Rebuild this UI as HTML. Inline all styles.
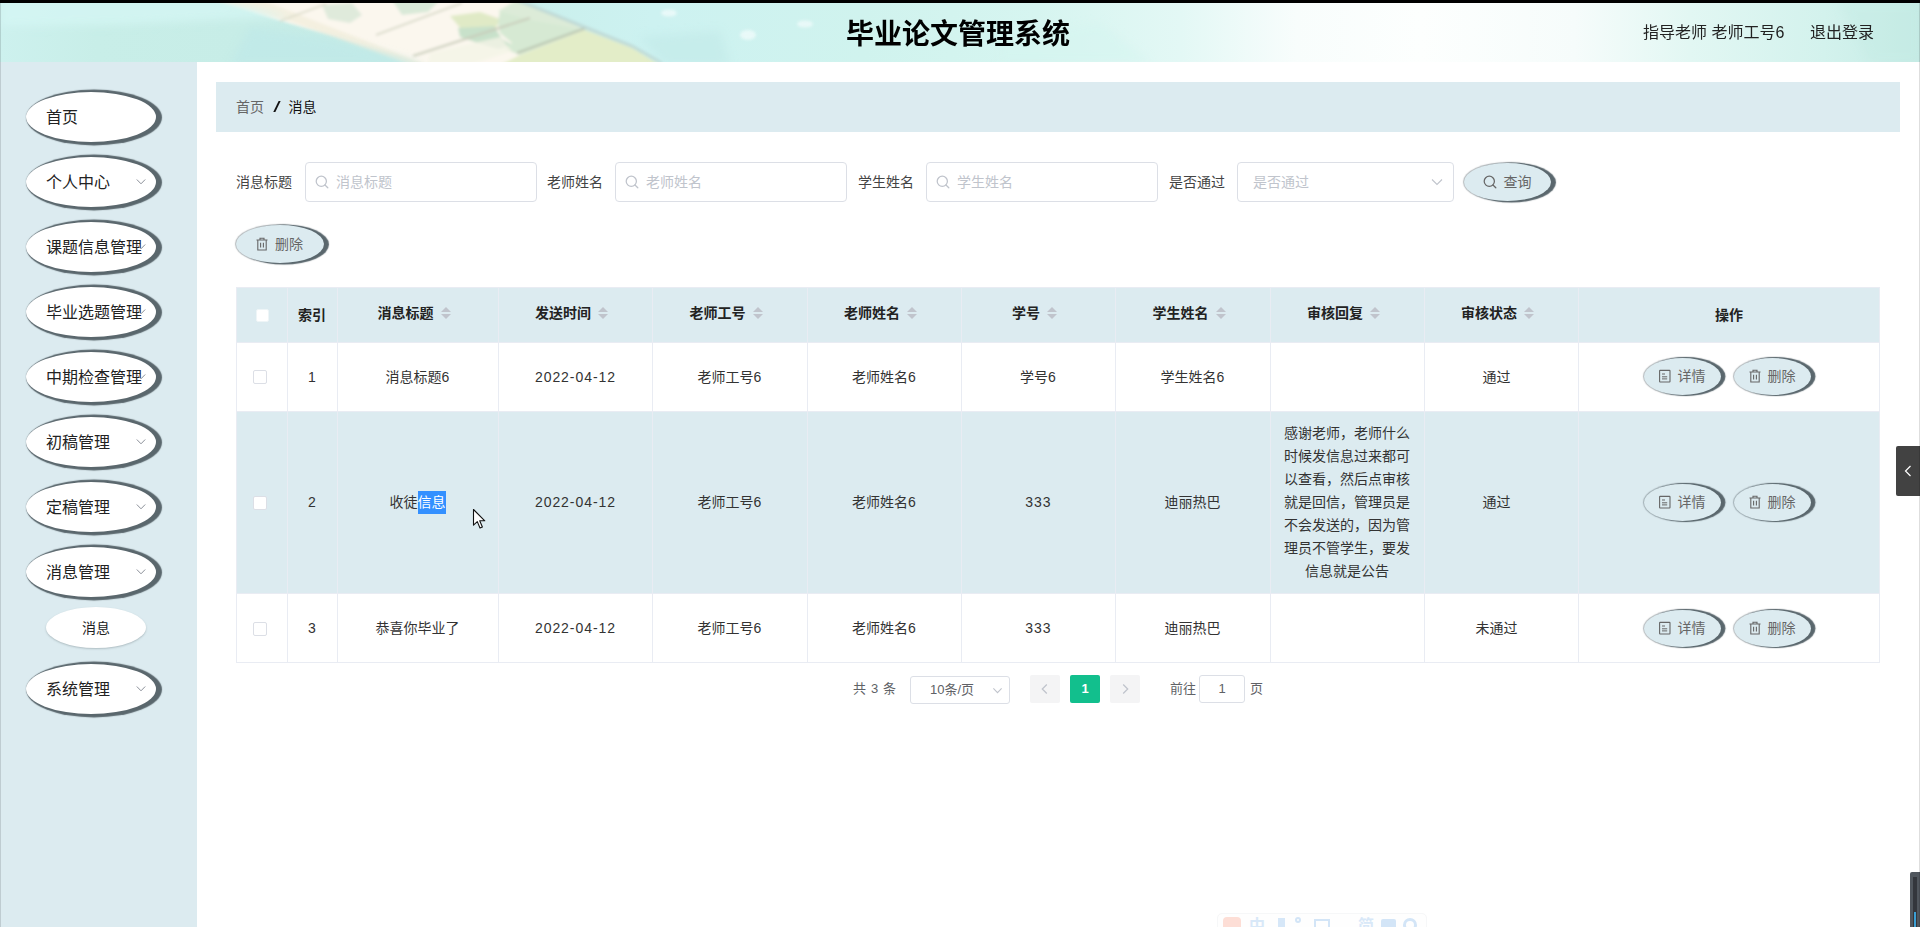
<!DOCTYPE html>
<html lang="zh-CN">
<head>
<meta charset="utf-8">
<title>毕业论文管理系统</title>
<style>
*{box-sizing:border-box;margin:0;padding:0}
html,body{width:1920px;height:927px;overflow:hidden;background:#fff}
body{font-family:"Liberation Sans","Noto Sans CJK SC",sans-serif;color:#333;position:relative;font-size:14px}
.abs{position:absolute}
#topbar{left:0;top:0;width:1920px;height:3px;background:#000}
#header{left:0;top:3px;width:1920px;height:59px;overflow:hidden;background:#d3f1ee}
#title{left:-2px;top:5px;width:1920px;height:59px;line-height:59px;text-align:center;font-size:28px;font-weight:bold;color:#000}
.hr{top:3px;height:59px;line-height:59px;font-size:16px;color:#222}
#sidebar{left:0;top:62px;width:197px;height:865px;background:#dcebf0}
.menu{left:26px;width:130px;height:50px;border-radius:50%;background:#fff;box-shadow:3px .5px 1px 3px #5a676d;font-size:16px;color:#222;line-height:52px;padding-left:20px}
.sub{left:46px;top:607px;width:100px;height:41px;border-radius:50%;background:#fff;box-shadow:0 1px 2px rgba(90,103,109,.35);font-size:14px;color:#222;line-height:43px;text-align:center}
#crumb{left:216px;top:82px;width:1684px;height:50px;background:#dcebf0;line-height:50px;padding-left:20px;font-size:14px;color:#333}
.lbl{top:162px;height:40px;line-height:40px;font-size:14px;color:#444}
.inp{top:162px;height:40px;border:1px solid #dcdfe6;border-radius:4px;background:#fff;line-height:38px;font-size:14px;color:#c0c4cc}
.btn{border-radius:50%;background:#dcebf0;box-shadow:2px 0 1px 2px #5a676d;color:#666;font-size:14px;text-align:center}

.ic{display:inline-block;vertical-align:middle}
.bt{line-height:38px;white-space:nowrap}
.bt svg{vertical-align:-2px;margin-right:7px;margin-left:-1px}
#tbl{left:236px;top:287px;width:1644px;height:376px}
.cell{position:absolute;text-align:center;font-size:14px;color:#333;line-height:23px;white-space:nowrap}
.hd{font-weight:bold;color:#222}
.vl{position:absolute;top:0;width:1px;height:375px;background:#e9ecf3}
.hl{position:absolute;left:0;width:1644px;height:1px;background:#e9ecf3}
.cb{position:absolute;width:14px;height:14px;border:1px solid #dcdfe6;border-radius:2px;background:#fff}
.caret{display:inline-block;position:relative;width:24px;height:34px;vertical-align:middle}
.caret i{position:absolute;left:7px;width:0;height:0;border:5px solid transparent}
.caret i.u{top:5px;border-bottom-color:#c0c4cc}
.caret i.d{bottom:7px;border-top-color:#c0c4cc}
.pg{font-size:13px;color:#606266;top:675px;height:28px;line-height:28px}
.n{letter-spacing:.95px;margin-right:-.95px}
</style>
</head>
<body>
<div id="topbar" class="abs"></div>
<div id="header" class="abs"><svg width="1920" height="59" viewBox="0 0 1920 59" style="display:block">
<defs>
<linearGradient id="hg" x1="0" y1="0" x2="1920" y2="0" gradientUnits="userSpaceOnUse">
<stop offset="0" stop-color="#cdf1ee"/><stop offset="0.05" stop-color="#c8eee8"/><stop offset="0.2" stop-color="#c6ece6"/>
<stop offset="0.34" stop-color="#cdf2f1"/><stop offset="0.45" stop-color="#d0f3ee"/><stop offset="0.54" stop-color="#d6f5f0"/>
<stop offset="0.615" stop-color="#e3f8f5"/><stop offset="0.675" stop-color="#f8fdfc"/><stop offset="0.74" stop-color="#fdfffe"/>
<stop offset="0.82" stop-color="#f6fcfb"/><stop offset="0.88" stop-color="#e2f7f3"/><stop offset="0.95" stop-color="#d3f2ed"/><stop offset="1" stop-color="#c6ebe5"/>
</linearGradient>
<filter id="bl" x="-5%" y="-20%" width="110%" height="140%"><feGaussianBlur stdDeviation="1.6"/></filter>
<filter id="bl2" x="-5%" y="-30%" width="110%" height="160%"><feGaussianBlur stdDeviation="4"/></filter>
</defs>
<rect width="1920" height="59" fill="url(#hg)"/>
<g filter="url(#bl)">
<polygon points="212,-3 517,-3 660,62 428,62" fill="#fbf7ee"/>
<polygon points="212,-3 262,-3 300,12 428,62 410,62 290,18" fill="#f3eddc" opacity=".8"/>
<polygon points="322,2 352,0 362,12 350,20 328,16" fill="#dfeadb"/>
<polygon points="392,-3 440,-3 428,9 402,12" fill="#d9e9d8"/>
<polygon points="450,13 480,9 500,16 496,25 462,27" fill="#e0eac6"/>
<polygon points="458,25 494,23 502,36 512,42 498,46 478,40 460,34" fill="#c8e1ca"/>
<polygon points="500,8 530,14 585,27 520,52 505,46 512,40 500,30 498,20" fill="#d6e9d3"/>
<polygon points="517,-3 560,14 585,27 530,17 498,8" fill="#dcebd8"/>
<polygon points="585,27 632,45 660,62 500,62 518,53" fill="#e3edc8"/>
<polygon points="430,50 500,34 512,48 470,62 428,62" fill="#f4f4e6" opacity=".8"/>
<path d="M326 1L280 18" stroke="#d9d9c8" stroke-width="1.6" fill="none"/>
<path d="M462 0L376 32" stroke="#d2d4c3" stroke-width="1.8" fill="none"/>
<path d="M530 15L413 53" stroke="#c8ccba" stroke-width="2" fill="none"/>
<path d="M586 25L517 50" stroke="#b8c3ad" stroke-width="2" fill="none"/>
<path d="M517 -3L632 43L662 60" stroke="#bfd9d6" stroke-width="3" fill="none"/>
</g>
<g filter="url(#bl2)">
<polygon points="0,-5 215,-5 290,14 120,22 0,24" fill="#d6f6f5" opacity=".7"/>
<polygon points="250,24 330,36 425,62 230,62" fill="#bfe8e8" opacity=".7"/>
<polygon points="640,34 720,28 730,62 665,62" fill="#c2eae7" opacity=".6"/>
<polygon points="1840,0 1920,0 1920,59 1870,59" fill="#c4eae3" opacity=".4"/>
<polygon points="1000,40 1100,20 1150,59 1000,59" fill="#d6f5f0" opacity=".6"/>
</g>
<g filter="url(#bl)" fill="#eefbfa" opacity=".85">
<ellipse cx="669" cy="10" rx="8" ry="3.5"/><ellipse cx="748" cy="32" rx="8" ry="5"/><ellipse cx="805" cy="21" rx="8" ry="3.5"/>
</g>
</svg></div>
<div id="title" class="abs">毕业论文管理系统</div>
<div class="abs hr" style="left:1643px">指导老师 老师工号6</div>
<div class="abs hr" style="left:1810px">退出登录</div>
<div id="sidebar" class="abs"></div>
<div class="abs menu" style="top:92px">首页</div>
<div class="abs menu" style="top:157px">个人中心<svg class="abs" style="left:110px;top:21px" width="10" height="8" viewBox="0 0 10 8"><path d="M0.8 1.5L5 5.8L9.2 1.5" fill="none" stroke="#8a8f98" stroke-width="1"/></svg></div>
<div class="abs menu" style="top:222px">课题信息管理<svg class="abs" style="left:110px;top:21px" width="10" height="8" viewBox="0 0 10 8"><path d="M0.8 1.5L5 5.8L9.2 1.5" fill="none" stroke="#8a8f98" stroke-width="1"/></svg></div>
<div class="abs menu" style="top:287px">毕业选题管理<svg class="abs" style="left:110px;top:21px" width="10" height="8" viewBox="0 0 10 8"><path d="M0.8 1.5L5 5.8L9.2 1.5" fill="none" stroke="#8a8f98" stroke-width="1"/></svg></div>
<div class="abs menu" style="top:352px">中期检查管理<svg class="abs" style="left:110px;top:21px" width="10" height="8" viewBox="0 0 10 8"><path d="M0.8 1.5L5 5.8L9.2 1.5" fill="none" stroke="#8a8f98" stroke-width="1"/></svg></div>
<div class="abs menu" style="top:417px">初稿管理<svg class="abs" style="left:110px;top:21px" width="10" height="8" viewBox="0 0 10 8"><path d="M0.8 1.5L5 5.8L9.2 1.5" fill="none" stroke="#8a8f98" stroke-width="1"/></svg></div>
<div class="abs menu" style="top:482px">定稿管理<svg class="abs" style="left:110px;top:21px" width="10" height="8" viewBox="0 0 10 8"><path d="M0.8 1.5L5 5.8L9.2 1.5" fill="none" stroke="#8a8f98" stroke-width="1"/></svg></div>
<div class="abs menu" style="top:547px">消息管理<svg class="abs" style="left:110px;top:21px" width="10" height="8" viewBox="0 0 10 8"><path d="M0.8 1.5L5 5.8L9.2 1.5" fill="none" stroke="#8a8f98" stroke-width="1"/></svg></div>
<div class="abs sub">消息</div>
<div class="abs menu" style="top:664px">系统管理<svg class="abs" style="left:110px;top:21px" width="10" height="8" viewBox="0 0 10 8"><path d="M0.8 1.5L5 5.8L9.2 1.5" fill="none" stroke="#8a8f98" stroke-width="1"/></svg></div>
<div id="crumb" class="abs"><span style="color:#666">首页</span><span style="display:inline-block;margin:0 10px 0 10.5px;color:#111;transform:scaleX(1.9)">/</span><span style="color:#111">消息</span></div>
<div class="abs lbl" style="left:236px">消息标题</div>
<div class="abs inp" style="left:305px;width:232px"><span class="abs" style="left:9px;top:-1px;color:#bfc3cb"><svg class="ic" width="14" height="14" viewBox="0 0 14 14"><circle cx="6.3" cy="6.3" r="5.1" fill="none" stroke="currentColor" stroke-width="1.25"/><path d="M10 10L12.8 12.8" stroke="currentColor" stroke-width="1.25" stroke-linecap="round"/></svg></span><span class="abs" style="left:30px;top:0">消息标题</span></div>
<div class="abs lbl" style="left:547px">老师姓名</div>
<div class="abs inp" style="left:615px;width:232px"><span class="abs" style="left:9px;top:-1px;color:#bfc3cb"><svg class="ic" width="14" height="14" viewBox="0 0 14 14"><circle cx="6.3" cy="6.3" r="5.1" fill="none" stroke="currentColor" stroke-width="1.25"/><path d="M10 10L12.8 12.8" stroke="currentColor" stroke-width="1.25" stroke-linecap="round"/></svg></span><span class="abs" style="left:30px;top:0">老师姓名</span></div>
<div class="abs lbl" style="left:858px">学生姓名</div>
<div class="abs inp" style="left:926px;width:232px"><span class="abs" style="left:9px;top:-1px;color:#bfc3cb"><svg class="ic" width="14" height="14" viewBox="0 0 14 14"><circle cx="6.3" cy="6.3" r="5.1" fill="none" stroke="currentColor" stroke-width="1.25"/><path d="M10 10L12.8 12.8" stroke="currentColor" stroke-width="1.25" stroke-linecap="round"/></svg></span><span class="abs" style="left:30px;top:0">学生姓名</span></div>
<div class="abs lbl" style="left:1169px">是否通过</div>
<div class="abs inp" style="left:1237px;width:217px"><span class="abs" style="left:15px;top:0">是否通过</span><svg class="abs" style="left:193px;top:13px" width="12" height="12" viewBox="0 0 12 12"><path d="M1 3.5L6 8.5L11 3.5" fill="none" stroke="#c0c4cc" stroke-width="1.1"/></svg></div>
<div class="abs btn bt" style="left:1464px;top:163px;width:87px;height:38px;box-shadow:4px .5px 1px 1px #5a676d,0 0 1px 1px rgba(90,103,109,.45)"><svg class="ic" width="14" height="14" viewBox="0 0 14 14"><circle cx="6.3" cy="6.3" r="5.1" fill="none" stroke="currentColor" stroke-width="1.25"/><path d="M10 10L12.8 12.8" stroke="currentColor" stroke-width="1.25" stroke-linecap="round"/></svg><span>查询</span></div>
<div class="abs btn bt" style="left:236px;top:225px;width:88px;height:38px;box-shadow:4px .5px 1px 1px #5a676d,0 0 1px 1px rgba(90,103,109,.45)"><svg class="ic" width="12" height="14" viewBox="0 0 12 14"><path d="M0.5 3H11.5M4 3V1.2H8V3M1.8 3V13H10.2V3M4.6 5.8V10.5M7.4 5.8V10.5" fill="none" stroke="currentColor" stroke-width="1.1"/></svg><span>删除</span></div>
<div id="tbl" class="abs">
<div class="abs" style="left:0;top:0;width:1644px;height:55px;background:#dcebf0"></div>
<div class="abs" style="left:0;top:124px;width:1644px;height:182px;background:#dcebf0"></div>
<div class="vl" style="left:0px"></div><div class="vl" style="left:51px"></div><div class="vl" style="left:101px"></div><div class="vl" style="left:262px"></div><div class="vl" style="left:416px"></div><div class="vl" style="left:571px"></div><div class="vl" style="left:725px"></div><div class="vl" style="left:879px"></div><div class="vl" style="left:1034px"></div><div class="vl" style="left:1188px"></div><div class="vl" style="left:1342px"></div><div class="vl" style="left:1643px"></div>
<div class="hl" style="top:0px"></div><div class="hl" style="top:55px"></div><div class="hl" style="top:124px"></div><div class="hl" style="top:306px"></div><div class="hl" style="top:375px"></div>
<div class="cell hd" style="left:51px;top:17px;width:50px;height:23px">索引</div>
<div class="cell hd" style="left:101px;top:9px;width:161px;height:34px;line-height:34px">消息标题<span class="caret"><i class="u"></i><i class="d"></i></span></div>
<div class="cell hd" style="left:262px;top:9px;width:154px;height:34px;line-height:34px">发送时间<span class="caret"><i class="u"></i><i class="d"></i></span></div>
<div class="cell hd" style="left:416px;top:9px;width:155px;height:34px;line-height:34px">老师工号<span class="caret"><i class="u"></i><i class="d"></i></span></div>
<div class="cell hd" style="left:571px;top:9px;width:154px;height:34px;line-height:34px">老师姓名<span class="caret"><i class="u"></i><i class="d"></i></span></div>
<div class="cell hd" style="left:725px;top:9px;width:154px;height:34px;line-height:34px">学号<span class="caret"><i class="u"></i><i class="d"></i></span></div>
<div class="cell hd" style="left:879px;top:9px;width:155px;height:34px;line-height:34px">学生姓名<span class="caret"><i class="u"></i><i class="d"></i></span></div>
<div class="cell hd" style="left:1034px;top:9px;width:154px;height:34px;line-height:34px">审核回复<span class="caret"><i class="u"></i><i class="d"></i></span></div>
<div class="cell hd" style="left:1188px;top:9px;width:154px;height:34px;line-height:34px">审核状态<span class="caret"><i class="u"></i><i class="d"></i></span></div>
<div class="cell hd" style="left:1342px;top:17px;width:302px;height:23px">操作</div>
<div class="abs" style="left:182px;top:204px;width:28px;height:22.5px;background:#3390ff"></div>
<div class="cb" style="left:20px;top:22px;width:13px;height:13px;border-color:#eef5f7"></div>
<div class="cb" style="left:17px;top:83px"></div>
<div class="cell" style="left:51px;top:79.0px;width:50px">1</div>
<div class="cell" style="left:101px;top:79.0px;width:161px">消息标题6</div>
<div class="cell" style="left:262px;top:79.0px;width:154px"><span class="n">2022-04-12</span></div>
<div class="cell" style="left:416px;top:79.0px;width:155px">老师工号6</div>
<div class="cell" style="left:571px;top:79.0px;width:154px">老师姓名6</div>
<div class="cell" style="left:725px;top:79.0px;width:154px">学号6</div>
<div class="cell" style="left:879px;top:79.0px;width:155px">学生姓名6</div>
<div class="cell" style="left:1188px;top:79.0px;width:154px"><span style="margin-right:9px">通过</span></div>
<div class="abs btn bt" style="left:1408px;top:71px;width:77px;height:37px;line-height:37px;box-shadow:3.5px 0 1px 1px #5a676d,0 0 1px 1px rgba(90,103,109,.45)"><svg class="ic" width="12" height="14" viewBox="0 0 12 14"><rect x="0.6" y="1.4" width="10.4" height="11.6" rx="0.5" fill="none" stroke="currentColor" stroke-width="1.1"/><path d="M3 5H6M3 7.8H8.2M3 9.9H8.2" stroke="currentColor" stroke-width="1"/></svg><span>详情</span></div>
<div class="abs btn bt" style="left:1498px;top:71px;width:77px;height:37px;line-height:37px;box-shadow:3.5px 0 1px 1px #5a676d,0 0 1px 1px rgba(90,103,109,.45)"><svg class="ic" width="12" height="14" viewBox="0 0 12 14"><path d="M0.5 3H11.5M4 3V1.2H8V3M1.8 3V13H10.2V3M4.6 5.8V10.5M7.4 5.8V10.5" fill="none" stroke="currentColor" stroke-width="1.1"/></svg><span>删除</span></div>
<div class="cb" style="left:17px;top:209px"></div>
<div class="cell" style="left:51px;top:203.5px;width:50px">2</div>
<div class="cell" style="left:101px;top:203.5px;width:161px">收徒<span style="color:#fff;position:relative;z-index:1">信息</span></div>
<div class="cell" style="left:262px;top:203.5px;width:154px"><span class="n">2022-04-12</span></div>
<div class="cell" style="left:416px;top:203.5px;width:155px">老师工号6</div>
<div class="cell" style="left:571px;top:203.5px;width:154px">老师姓名6</div>
<div class="cell" style="left:725px;top:203.5px;width:154px"><span class="n">333</span></div>
<div class="cell" style="left:879px;top:203.5px;width:155px">迪丽热巴</div>
<div class="cell" style="left:1034px;top:134.5px;width:154px">感谢老师，老师什么<br>时候发信息过来都可<br>以查看，然后点审核<br>就是回信，管理员是<br>不会发送的，因为管<br>理员不管学生，要发<br>信息就是公告</div>
<div class="cell" style="left:1188px;top:203.5px;width:154px"><span style="margin-right:9px">通过</span></div>
<div class="abs btn bt" style="left:1408px;top:197px;width:77px;height:37px;line-height:37px;box-shadow:3.5px 0 1px 1px #5a676d,0 0 1px 1px rgba(90,103,109,.45)"><svg class="ic" width="12" height="14" viewBox="0 0 12 14"><rect x="0.6" y="1.4" width="10.4" height="11.6" rx="0.5" fill="none" stroke="currentColor" stroke-width="1.1"/><path d="M3 5H6M3 7.8H8.2M3 9.9H8.2" stroke="currentColor" stroke-width="1"/></svg><span>详情</span></div>
<div class="abs btn bt" style="left:1498px;top:197px;width:77px;height:37px;line-height:37px;box-shadow:3.5px 0 1px 1px #5a676d,0 0 1px 1px rgba(90,103,109,.45)"><svg class="ic" width="12" height="14" viewBox="0 0 12 14"><path d="M0.5 3H11.5M4 3V1.2H8V3M1.8 3V13H10.2V3M4.6 5.8V10.5M7.4 5.8V10.5" fill="none" stroke="currentColor" stroke-width="1.1"/></svg><span>删除</span></div>
<div class="cb" style="left:17px;top:335px"></div>
<div class="cell" style="left:51px;top:330.0px;width:50px">3</div>
<div class="cell" style="left:101px;top:330.0px;width:161px">恭喜你毕业了</div>
<div class="cell" style="left:262px;top:330.0px;width:154px"><span class="n">2022-04-12</span></div>
<div class="cell" style="left:416px;top:330.0px;width:155px">老师工号6</div>
<div class="cell" style="left:571px;top:330.0px;width:154px">老师姓名6</div>
<div class="cell" style="left:725px;top:330.0px;width:154px"><span class="n">333</span></div>
<div class="cell" style="left:879px;top:330.0px;width:155px">迪丽热巴</div>
<div class="cell" style="left:1188px;top:330.0px;width:154px"><span style="margin-right:9px">未通过</span></div>
<div class="abs btn bt" style="left:1408px;top:323px;width:77px;height:37px;line-height:37px;box-shadow:3.5px 0 1px 1px #5a676d,0 0 1px 1px rgba(90,103,109,.45)"><svg class="ic" width="12" height="14" viewBox="0 0 12 14"><rect x="0.6" y="1.4" width="10.4" height="11.6" rx="0.5" fill="none" stroke="currentColor" stroke-width="1.1"/><path d="M3 5H6M3 7.8H8.2M3 9.9H8.2" stroke="currentColor" stroke-width="1"/></svg><span>详情</span></div>
<div class="abs btn bt" style="left:1498px;top:323px;width:77px;height:37px;line-height:37px;box-shadow:3.5px 0 1px 1px #5a676d,0 0 1px 1px rgba(90,103,109,.45)"><svg class="ic" width="12" height="14" viewBox="0 0 12 14"><path d="M0.5 3H11.5M4 3V1.2H8V3M1.8 3V13H10.2V3M4.6 5.8V10.5M7.4 5.8V10.5" fill="none" stroke="currentColor" stroke-width="1.1"/></svg><span>删除</span></div>
</div>
<div class="abs pg" style="left:853px;word-spacing:1.3px">共 3 条</div>
<div class="abs pg" style="left:910px;top:676px;width:100px;border:1px solid #dcdfe6;border-radius:3px;line-height:26px;background:#fff"><span class="abs" style="left:19px;top:0">10条/页</span><svg class="abs" style="left:81px;top:8px" width="11" height="11" viewBox="0 0 12 12"><path d="M1.5 3.8L6 8.3L10.5 3.8" fill="none" stroke="#c0c4cc" stroke-width="1.2"/></svg></div>
<div class="abs pg" style="left:1030px;width:30px;background:#f4f4f5;border-radius:2px"><svg class="abs" style="left:9px;top:8px" width="12" height="12" viewBox="0 0 12 12"><path d="M7.8 1.5L3.3 6L7.8 10.5" fill="none" stroke="#c0c4cc" stroke-width="1.3"/></svg></div>
<div class="abs pg" style="left:1070px;width:30px;background:#12bf8d;border-radius:2px;color:#fff;font-weight:bold;text-align:center">1</div>
<div class="abs pg" style="left:1110px;width:30px;background:#f4f4f5;border-radius:2px"><svg class="abs" style="left:9px;top:8px" width="12" height="12" viewBox="0 0 12 12"><path d="M4.2 1.5L8.7 6L4.2 10.5" fill="none" stroke="#c0c4cc" stroke-width="1.3"/></svg></div>
<div class="abs pg" style="left:1170px">前往</div>
<div class="abs pg" style="left:1199px;width:46px;border:1px solid #dcdfe6;border-radius:3px;line-height:26px;text-align:center;background:#fff">1</div>
<div class="abs pg" style="left:1250px">页</div>
<div class="abs" style="left:1896px;top:446px;width:24px;height:50px;background:#424242;border-radius:2px 0 0 2px"><svg class="abs" style="left:7px;top:19px" width="10" height="12" viewBox="0 0 10 12"><path d="M7.5 1L2.5 6L7.5 11" fill="none" stroke="#fff" stroke-width="1.2"/></svg></div>
<div class="abs" style="left:1910px;top:872px;width:10px;height:55px;background:#50565d;border-radius:2px 0 0 0"><div class="abs" style="left:3px;top:5px;width:4px;height:50px;background:#33363c"></div><div class="abs" style="left:4px;top:40px;width:2px;height:15px;background:#3b9fd4"></div></div>
<svg class="abs" style="left:472px;top:508px;z-index:5" width="15" height="23" viewBox="0 0 15 23"><path d="M1.5 1.5V17.2L5.3 13.6L8 20L10.4 19L7.7 12.8H12.8Z" fill="#fff" stroke="#111" stroke-width="1.1" stroke-linejoin="round"/></svg>
<div class="abs" style="left:1217px;top:913px;width:210px;height:30px;border:1px solid #f6f7f8;border-radius:5px;background:#fefefe;font-size:16px;line-height:20px;color:#d8e8f8;font-weight:bold;overflow:hidden">
<div class="abs" style="left:5px;top:3px;width:18px;height:18px;border-radius:4px;background:#fdded6"></div>
<span class="abs" style="left:31px;top:2px">中</span>
<div class="abs" style="left:60px;top:4px;width:7px;height:12px;border-radius:0 0 6px 6px;background:#d6e7f8"></div>
<div class="abs" style="left:77px;top:3px;width:6px;height:6px;border-radius:50%;border:2px solid #d3e5f7"></div>
<div class="abs" style="left:96px;top:5px;width:16px;height:10px;border:2px solid #d3e5f7"></div>
<span class="abs" style="left:140px;top:2px">简</span>
<div class="abs" style="left:163px;top:5px;width:15px;height:10px;background:#d3e5f7;border-radius:2px"></div>
<div class="abs" style="left:185px;top:4px;width:14px;height:14px;border-radius:50%;border:3px solid #d3e5f7"></div>
</div>
<div class="abs" style="left:1919px;top:3px;width:1px;height:924px;background:rgba(0,0,0,.13);z-index:9"></div>
<div class="abs" style="left:0;top:3px;width:1px;height:924px;background:rgba(0,0,0,.13);z-index:9"></div>
</body>
</html>
